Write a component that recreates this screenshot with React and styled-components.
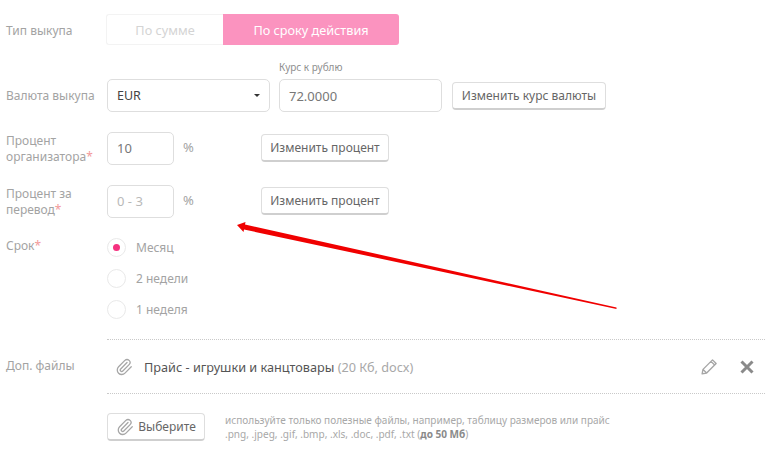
import React from "react";
import styled, { createGlobalStyle } from "styled-components";
import { Paperclip } from "lucide-react";

const Global = createGlobalStyle`
  html, body { margin: 0; padding: 0; background: #fff; }
  body { font-family: "Noto Sans", "Open Sans", sans-serif; width: 770px; height: 464px; overflow: hidden; }
`;

const Page = styled.div`
  position: relative;
  width: 770px;
  height: 464px;
  padding: 14px 5px 0 6px;
  box-sizing: border-box;
  display: flex;
  flex-direction: column;
`;

const Row = styled.div`
  display: flex;
  align-items: ${(p) => p.$align || "flex-start"};
  margin-top: ${(p) => p.$top || 0}px;
`;

const Label = styled.div`
  width: 101px;
  flex: none;
  font-size: 12px;
  line-height: 16px;
  color: #a3a3a3;
  padding-top: ${(p) => p.$pt || 0}px;
  position: relative;
  top: ${(p) => p.$shift || 0}px;
`;

const Star = styled.span`
  color: #f29a9a;
`;

const Toggle = styled.div`
  display: flex;
  height: 31px;
  width: 293px;
  margin-left: -1px;
`;

const Segment = styled.div`
  display: flex;
  align-items: center;
  justify-content: center;
  font-size: 12.7px;
  box-sizing: border-box;
  width: ${(p) => p.$w}px;
  color: ${(p) => (p.$active ? "#fff" : "#d4d4d4")};
  background: ${(p) => (p.$active ? "#fb93bf" : "#fff")};
  border: ${(p) => (p.$active ? "none" : "1px solid #f3f3f3")};
  border-right: none;
  border-radius: ${(p) => (p.$active ? "0 3px 3px 0" : "3px 0 0 3px")};
`;

const Select = styled.div`
  width: 163px;
  height: 33px;
  box-sizing: border-box;
  border: 1px solid #dedede;
  border-radius: 5px;
  display: flex;
  align-items: center;
  justify-content: space-between;
  padding: 0 9px;
  font-size: 12.5px;
  color: #444;
`;

const Caret = styled.span`
  width: 0;
  height: 0;
  border-left: 3px solid transparent;
  border-right: 3px solid transparent;
  border-top: 3px solid #333;
`;

const Field = styled.div`
  width: ${(p) => p.$w}px;
  height: 33px;
  flex: none;
  box-sizing: border-box;
  border: 1px solid #dedede;
  border-radius: 5px;
  display: flex;
  align-items: center;
  padding: 0 0 ${(p) => p.$pb || 0}px 9px;
  font-size: 13px;
  color: ${(p) => (p.$placeholder ? "#b9b9b9" : "#777")};
`;

const RateGroup = styled.div`
  margin-left: 9px;
  position: relative;
`;

const RateCaption = styled.div`
  position: absolute;
  left: 0;
  top: -18px;
  font-size: 10px;
  line-height: 13px;
  color: #8f8f8f;
  white-space: nowrap;
`;

const Button = styled.div`
  height: 28px;
  box-sizing: border-box;
  width: ${(p) => p.$w}px;
  flex: none;
  margin-left: ${(p) => p.$left || 0}px;
  margin-top: ${(p) => p.$mt || 0}px;
  border: 1px solid #dedede;
  border-bottom: 2px solid #cfcfcf;
  border-radius: 4px;
  background: #fff;
  display: flex;
  align-items: center;
  justify-content: center;
  gap: 4px;
  font-size: 12px;
  color: #666;
  white-space: nowrap;
`;

const Percent = styled.div`
  width: 78px;
  margin-left: 9px;
  flex: none;
  font-size: 13px;
  line-height: 31px;
  color: #a3a3a3;
`;

const Radios = styled.div`
  display: flex;
  flex-direction: column;
  gap: 11px;
  margin-top: -2px;
`;

const RadioRow = styled.div`
  display: flex;
  align-items: center;
  gap: 10px;
  height: 20px;
  font-size: 12px;
  color: #a3a3a3;
`;

const RadioText = styled.span`
  padding-top: 1px;
`;

const Circle = styled.span`
  width: 19px;
  height: 19px;
  box-sizing: border-box;
  border: 1px solid #e9e9e9;
  border-radius: 50%;
  display: flex;
  align-items: center;
  justify-content: center;
  &::after {
    content: "";
    display: ${(p) => (p.$on ? "block" : "none")};
    width: 7px;
    height: 7px;
    border-radius: 50%;
    background: #f5317f;
  }
`;

const FileSection = styled.div`
  display: flex;
  margin-top: 20px;
`;

const FileLabel = styled(Label)`
  margin-right: -101px;
  padding-top: 19px;
`;

const FileBody = styled.div`
  flex: 1;
  margin-left: 101px;
  height: 53px;
  border-top: 1px dotted #c9c9c9;
  border-bottom: 1px dotted #c9c9c9;
  display: flex;
  align-items: center;
  padding: 0 11px 0 8px;
  font-size: 12.7px;
`;

const FileName = styled.span`
  color: #555;
  margin-left: 11px;
  flex: 1;
`;

const FileMeta = styled.span`
  color: #a8a8a8;
`;

const FileActions = styled.div`
  display: flex;
  align-items: center;
  gap: 21px;
`;

const Upload = styled.div`
  display: flex;
  margin: 19px 0 0 101px;
`;

const Hint = styled.div`
  margin-left: 20px;
  font-size: 10.05px;
  line-height: 14px;
  color: #a8a8a8;
  white-space: nowrap;
  b { color: #8a8a8a; }
`;

const Arrow = styled.svg`
  position: absolute;
  left: 230px;
  top: 215px;
  pointer-events: none;
`;

const Clip = styled(Paperclip).attrs({ size: 18, strokeWidth: 1.7, color: "#a6a6a6" })`
  flex: none;
`;

const Pencil = () => (
  <svg width="20" height="20" viewBox="0 0 16 16" fill="none" stroke="#a6a6a6" strokeWidth="1.1" strokeLinejoin="round">
    <path d="M2.5 13.5l.7-3.6 7.6-7.6 2.9 2.9-7.6 7.6zM9.6 3.5l2.9 2.9M3.2 9.9l2.9 2.9" />
  </svg>
);

const Cross = () => (
  <svg width="14" height="14" viewBox="0 0 14 14" fill="none" stroke="#8a8a8a" strokeWidth="3">
    <path d="M1.5 1.5l11 11M12.5 1.5l-11 11" />
  </svg>
);

export default function App() {
  return (
    <Page>
      <Global />
      <Row $align="center">
        <Label $shift={1}>Тип выкупа</Label>
        <Toggle>
          <Segment $w={117}>По сумме</Segment>
          <Segment $w={176} $active>По сроку действия</Segment>
        </Toggle>
      </Row>
      <Row $top={34} $align="center">
        <Label>Валюта выкупа</Label>
        <Select>
          EUR
          <Caret />
        </Select>
        <RateGroup>
          <RateCaption>Курс к рублю</RateCaption>
          <Field $w={163}>72.0000</Field>
        </RateGroup>
        <Button $w={154} $left={10}>Изменить курс валюты</Button>
      </Row>
      <Row $top={20}>
        <Label $shift={1}>Процент<br />организатора<Star>*</Star></Label>
        <Field $w={67} $pb={2}>10</Field>
        <Percent>%</Percent>
        <Button $w={128} $mt={2}>Изменить процент</Button>
      </Row>
      <Row $top={20}>
        <Label $shift={1}>Процент за<br />перевод<Star>*</Star></Label>
        <Field $w={67} $pb={1} $placeholder>0 - 3</Field>
        <Percent>%</Percent>
        <Button $w={128} $mt={2}>Изменить процент</Button>
      </Row>
      <Row $top={21}>
        <Label $shift={-1}>Срок<Star>*</Star></Label>
        <Radios>
          <RadioRow><Circle $on /><RadioText>Месяц</RadioText></RadioRow>
          <RadioRow><Circle /><RadioText>2 недели</RadioText></RadioRow>
          <RadioRow><Circle /><RadioText>1 неделя</RadioText></RadioRow>
        </Radios>
      </Row>
      <FileSection>
        <FileLabel>Доп. файлы</FileLabel>
        <FileBody>
          <Clip />
          <FileName>Прайс - игрушки и канцтовары <FileMeta>(20 Кб, docx)</FileMeta></FileName>
          <FileActions>
            <Pencil />
            <Cross />
          </FileActions>
        </FileBody>
      </FileSection>
      <Upload>
        <Button $w={98}><Clip />Выберите</Button>
        <Hint>
          используйте только полезные файлы, например, таблицу размеров или прайс<br />
          .png, .jpeg, .gif, .bmp, .xls, .doc, .pdf, .txt (<b>до 50 Мб</b>)
        </Hint>
      </Upload>
      <Arrow width="400" height="105" viewBox="0 0 400 105">
        <path d="M7 10 L15.5 7 L15 9.5 L386.5 92.5 L386.5 94 L14 14.5 L13.5 17 Z" fill="#f00000" />
      </Arrow>
    </Page>
  );
}
